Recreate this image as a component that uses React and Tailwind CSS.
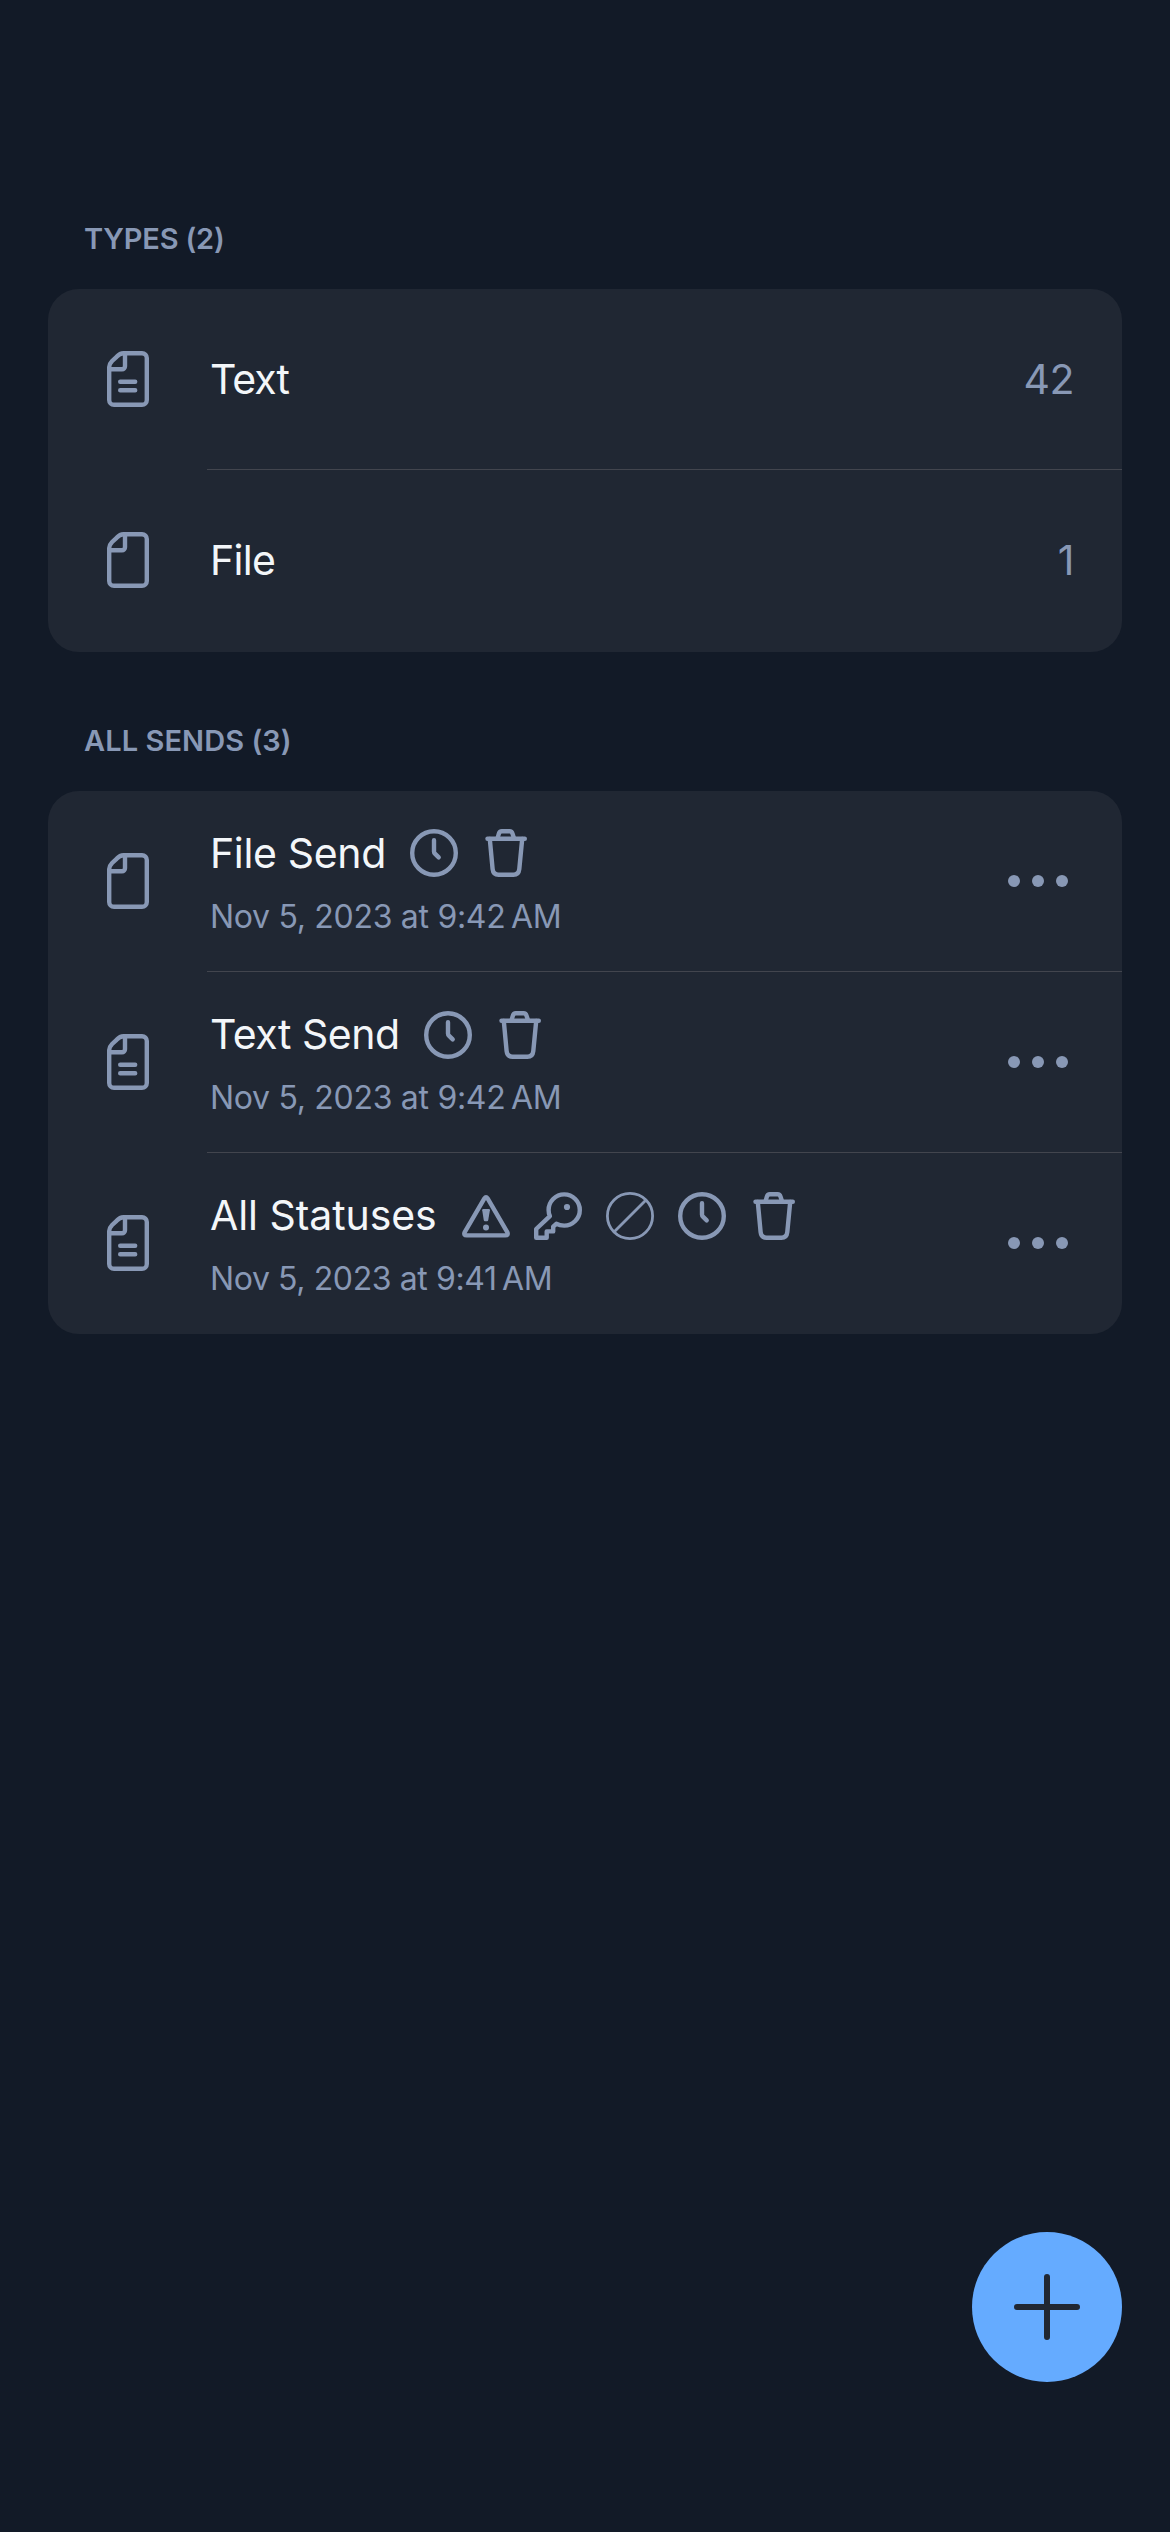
const stroke = {
  fill: "none",
  stroke: "currentColor",
  strokeWidth: 4.4,
  strokeLinecap: "round",
  strokeLinejoin: "round",
};

function FileIcon({ lines }) {
  return (
    <svg className="h-14 w-[42px] shrink-0" viewBox="0 0 42 56" {...stroke}>
      <path d="M16.5 2.2H35a4.8 4.8 0 0 1 4.8 4.8V49a4.8 4.8 0 0 1-4.8 4.8H7a4.8 4.8 0 0 1-4.8-4.8V16C2.2 13.5 3.2 12 5.1 10L9.6 5.8C11.6 3.6 13.6 2.2 16.5 2.2Z" />
      <path d="M18 2.2V15.3a3 3 0 0 1-3 3H2.2" />
      {lines && <path d="M13.2 30.8H28.2M13.2 39.2H28.2" />}
    </svg>
  );
}

const statusIcons = {
  clock: (
    <>
      <circle cx="24" cy="24" r="21.8" />
      <path d="M24 11.2V22.6Q24 23.8 24.9 24.6L28.7 28.4" />
    </>
  ),
  trash: (
    <>
      <path d="M5.5 9.8H42.8" />
      <path d="M15.6 9L16.8 4.8Q17.6 2.2 19.8 2.2H27.6Q29.8 2.2 30.6 4.8L31.9 9" />
      <path d="M7.8 10L10.6 40Q11.2 45.8 16.6 45.8H31.4Q36.7 45.8 37.3 40L40.2 10" />
    </>
  ),
  warning: (
    <>
      <path d="M22.4 6.4Q24 4 25.6 6.4L45.4 40.4Q46.6 43.4 43.3 43.4H4.7Q1.4 43.4 2.6 40.4Z" />
      <path
        d="M21.3 17H26.8Q28.1 17 27.9 18.3L26.2 28.2Q26 29.2 25 29.2H23Q22 29.2 21.8 28.2L20.2 18.3Q20 17 21.3 17Z"
        fill="currentColor"
        stroke="none"
      />
      <circle cx="24" cy="35.4" r="3" fill="currentColor" stroke="none" />
    </>
  ),
  key: (
    <>
      <path d="M22.3 31.8L19.2 34.6V39.4H12.7V45.8H2.2V37L15.9 24.2C14.9 22 14.6 20 14.6 18A15.6 15.6 0 1 1 30.2 33.6C27.5 33.6 25 33.2 22.3 31.8Z" />
      <circle cx="33" cy="15" r="3.1" fill="currentColor" stroke="none" />
    </>
  ),
  ban: (
    <g strokeWidth="2.8" strokeLinecap="butt">
      <circle cx="24" cy="24" r="22.6" />
      <path d="M8 40L40 8" />
    </g>
  ),
};

function StatusIcon({ name, className }) {
  return (
    <svg className={`size-12 shrink-0 ${className}`} viewBox="0 0 48 48" {...stroke}>
      {statusIcons[name]}
    </svg>
  );
}

function SectionTitle({ className, children }) {
  return (
    <h2 className={`mb-[30px] h-10 pl-9 text-[29px] leading-10 font-semibold text-[#8898b5] ${className}`}>
      {children}
    </h2>
  );
}

function Card({ className, children }) {
  return <div className={`overflow-hidden rounded-[31px] bg-[#202733] ${className}`}>{children}</div>;
}

function Row({ icon, last, children }) {
  return (
    <div className="flex h-[181px] pl-[59px] text-[#8898b5]">
      <div className="flex h-[180px] w-[100px] shrink-0 items-center">{icon}</div>
      <div
        className={`flex h-[181px] flex-1 items-center border-b pl-[3px] ${
          last ? "border-transparent" : "border-[#42454e]"
        }`}
      >
        {children}
      </div>
    </div>
  );
}

const types = [
  { name: "Text", count: 42, lines: true, tracking: "tracking-[-1px]" },
  { name: "File", count: 1, lines: false, tracking: "tracking-[-0.68px]" },
];

const sends = [
  {
    name: "File Send",
    box: "w-[176px] tracking-[-0.35px]",
    date: "Nov 5, 2023 at 9:42\u202fAM",
    dateTracking: "tracking-[-0.3px]",
    lines: false,
    iconOffset: "",
    icons: ["clock", "trash"],
  },
  {
    name: "Text Send",
    box: "w-[190px] tracking-[-0.47px]",
    date: "Nov 5, 2023 at 9:42\u202fAM",
    dateTracking: "tracking-[-0.3px]",
    lines: true,
    iconOffset: "mt-px",
    icons: ["clock", "trash"],
  },
  {
    name: "All Statuses",
    box: "w-[228px] tracking-[-0.07px]",
    date: "Nov 5, 2023 at 9:41\u202fAM",
    dateTracking: "tracking-[-0.39px]",
    lines: true,
    iconOffset: "mt-px",
    icons: ["warning", "key", "ban", "clock", "trash"],
  },
];

export default function App() {
  return (
    <main className="relative flex h-[2532px] w-[1170px] flex-col bg-[#121a27] px-12 pt-[219px] font-['Inter',sans-serif]">
      <SectionTitle className="tracking-[-0.2px]">TYPES (2)</SectionTitle>
      <Card className="h-[363px]">
        {types.map((type, i) => (
          <Row key={type.name} icon={<FileIcon lines={type.lines} />} last={i === types.length - 1}>
            <span className={`text-[41px] leading-[48px] text-[#f3f6f9] ${type.tracking}`}>{type.name}</span>
            <span className="mr-12 ml-auto text-[41px] leading-[48px] tracking-[-0.5px]">{type.count}</span>
          </Row>
        ))}
      </Card>

      <SectionTitle className="mt-[69px] tracking-[0.07px]">ALL SENDS (3)</SectionTitle>
      <Card className="h-[543px]">
        {sends.map((send, i) => (
          <Row key={send.name} icon={<FileIcon lines={send.lines} />} last={i === sends.length - 1}>
            <div className="flex flex-col self-start pt-[38px]">
              <div className="flex h-12 items-start gap-6">
                <span className={`text-[41px] leading-[48px] whitespace-nowrap text-[#f3f6f9] ${send.box}`}>
                  {send.name}
                </span>
                {send.icons.map((name) => (
                  <StatusIcon key={name} name={name} className={send.iconOffset} />
                ))}
              </div>
              <span className={`mt-5 text-[32px] leading-10 whitespace-nowrap ${send.dateTracking}`}>
                {send.date}
              </span>
            </div>
            <button className="mr-[54px] ml-auto flex gap-3" aria-label="More options">
              <span className="size-3 rounded-full bg-current" />
              <span className="size-3 rounded-full bg-current" />
              <span className="size-3 rounded-full bg-current" />
            </button>
          </Row>
        ))}
      </Card>

      <button
        className="absolute right-12 bottom-[150px] flex size-[150px] items-center justify-center rounded-full bg-[#65abff] text-[#202733]"
        aria-label="Add"
      >
        <svg className="size-[66px]" viewBox="0 0 66 66" {...stroke} strokeWidth="6">
          <path d="M33 3V63M3 33H63" />
        </svg>
      </button>
    </main>
  );
}
